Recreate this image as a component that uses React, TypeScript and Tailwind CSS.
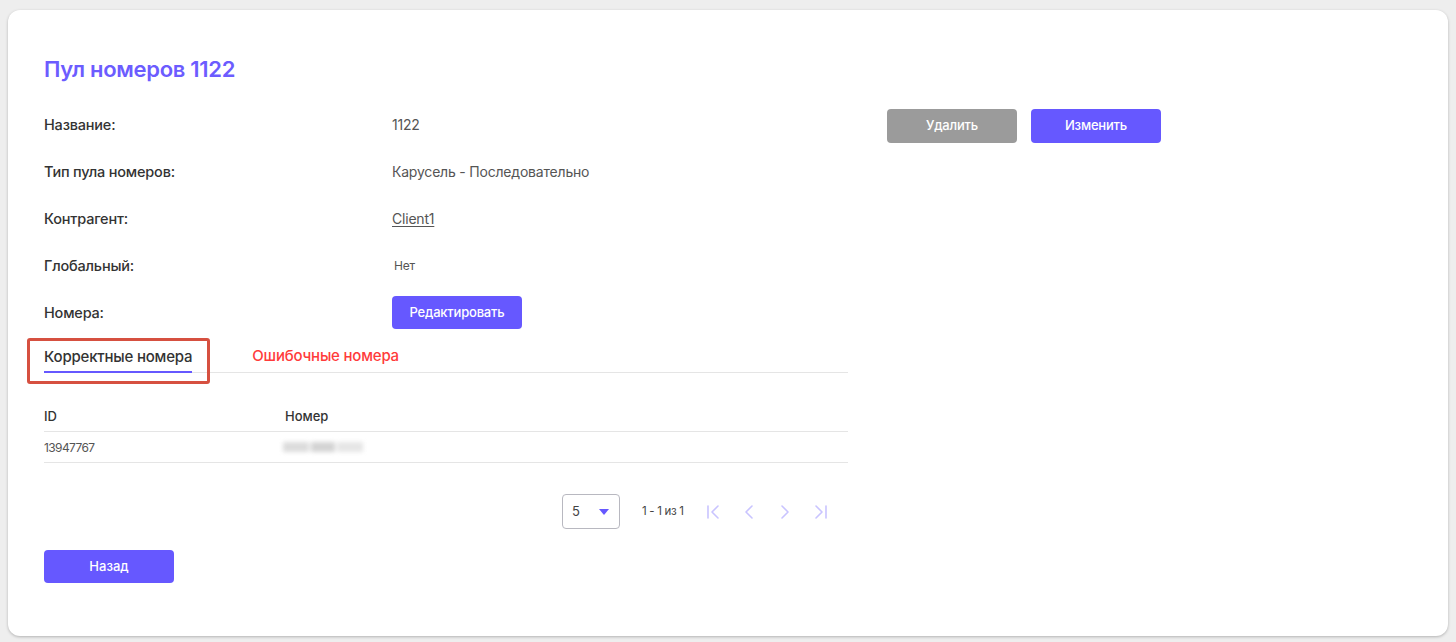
import { ChevronFirst, ChevronLast, ChevronLeft, ChevronRight } from 'lucide-react';

const rows = [
    { label: 'Название:', value: '1122' },
    { label: 'Тип пула номеров:', value: 'Карусель - Последовательно' },
    { label: 'Контрагент:', value: 'Client1', link: true },
    { label: 'Глобальный:', value: 'Нет', small: true },
];

export default function App() {
    return (
        <div className="min-h-[642px] bg-[#eeeeee] pt-[10px] px-[8px] pb-[6px] font-['Inter',sans-serif]">
            <div className="h-[626px] bg-white rounded-[12px] shadow-[0_1px_3px_rgba(0,0,0,0.25)] pl-[36px] pt-[45px]">
                {/* Title */}
                <h1 className="text-[22px] leading-[28px] font-semibold text-[#6c5cff] tracking-[-0.3px]">
                    Пул номеров 1122
                </h1>

                <div className="flex mt-[18px]">
                    {/* Details + table */}
                    <div className="w-[804px]">
                        {rows.map((row) => (
                            <div key={row.label} className="flex items-center h-[47px]">
                                <div className="w-[348px] text-[14.5px] font-medium text-[#333333] tracking-[-0.2px]">
                                    {row.label}
                                </div>
                                <div
                                    className={`${row.small ? 'text-[12px] pl-[2px]' : 'text-[14px]'} text-[#555555] tracking-[-0.2px] ${
                                        row.link ? 'underline underline-offset-2 text-[#333333]' : ''
                                    }`}
                                >
                                    {row.value}
                                </div>
                            </div>
                        ))}
                        <div className="flex items-center h-[47px]">
                            <div className="w-[348px] text-[14.5px] font-medium text-[#333333] tracking-[-0.2px]">
                                Номера:
                            </div>
                            <button className="w-[130px] h-[33px] rounded-[4px] bg-[#6658ff] text-white text-[13px] font-medium tracking-[-0.2px]">
                                Редактировать
                            </button>
                        </div>

                        {/* Tabs */}
                        <div className="relative flex items-end h-[36px] border-b border-[#e5e5e5] mt-[1px]">
                            <div className="pb-[3px] border-b-2 border-[#6658ff] text-[15px] leading-[22px] font-medium text-[#333333] tracking-[-0.2px] mb-[-1px]">
                                Корректные номера
                            </div>
                            <div className="ml-[60px] pb-[5px] text-[15px] leading-[22px] font-medium text-[#ff3b3b] tracking-[-0.2px]">
                                Ошибочные номера
                            </div>
                            <div className="absolute left-[-17px] top-[1px] w-[183px] h-[46px] border-[3px] border-[#d65040] rounded-[3px]" />
                        </div>

                        {/* Table */}
                        <div className="mt-[29px]">
                            <div className="flex items-center h-[30px] border-b border-[#e5e5e5] text-[13px] font-medium text-[#333333]">
                                <div className="w-[241px]">ID</div>
                                <div>Номер</div>
                            </div>
                            <div className="flex items-center h-[31px] border-b border-[#e5e5e5] text-[12px] text-[#555555]">
                                <div className="w-[239px] tracking-[-0.6px] pt-[2px]">13947767</div>
                                <div className="w-[82px] h-[10px] flex gap-[2px] blur-[2px]">
                                    <div className="w-[26px] h-full bg-[#dcdcdc]" />
                                    <div className="w-[24px] h-full bg-[#d4d4d4]" />
                                    <div className="w-[26px] h-full bg-[#e6e6e6]" />
                                </div>
                            </div>
                        </div>

                        {/* Pagination */}
                        <div className="flex items-center mt-[31px] ml-[518px]">
                            <div className="w-[58px] h-[35px] border border-[#b8b8c0] rounded-[4px] flex items-center pl-[9px] text-[13px] text-[#444444]">
                                <span>5</span>
                                <svg width="10" height="6" viewBox="0 0 10 6" className="ml-[19px]">
                                    <path d="M0 0h10L5 6z" fill="#6658ff" />
                                </svg>
                            </div>
                            <span className="ml-[22px] text-[11.5px] text-[#444444] tracking-[-0.3px]">1 - 1 из 1</span>
                            <div className="flex items-center ml-[17px] gap-[12px] text-[#c9c4ff]">
                                <ChevronFirst className="w-[24px] h-[24px]" strokeWidth={1.6} />
                                <ChevronLeft className="w-[24px] h-[24px]" strokeWidth={1.6} />
                                <ChevronRight className="w-[24px] h-[24px]" strokeWidth={1.6} />
                                <ChevronLast className="w-[24px] h-[24px]" strokeWidth={1.6} />
                            </div>
                        </div>

                        <button className="mt-[21px] w-[130px] h-[33px] rounded-[4px] bg-[#6658ff] text-white text-[13px] font-medium">
                            Назад
                        </button>
                    </div>

                    {/* Actions */}
                    <div className="flex gap-[14px] ml-[39px] pt-[8px]">
                        <button className="w-[130px] h-[34px] rounded-[4px] bg-[#9b9b9b] text-white text-[13px] font-medium tracking-[-0.2px]">
                            Удалить
                        </button>
                        <button className="w-[130px] h-[34px] rounded-[4px] bg-[#6658ff] text-white text-[13px] font-medium tracking-[-0.2px]">
                            Изменить
                        </button>
                    </div>
                </div>
            </div>
        </div>
    );
}
